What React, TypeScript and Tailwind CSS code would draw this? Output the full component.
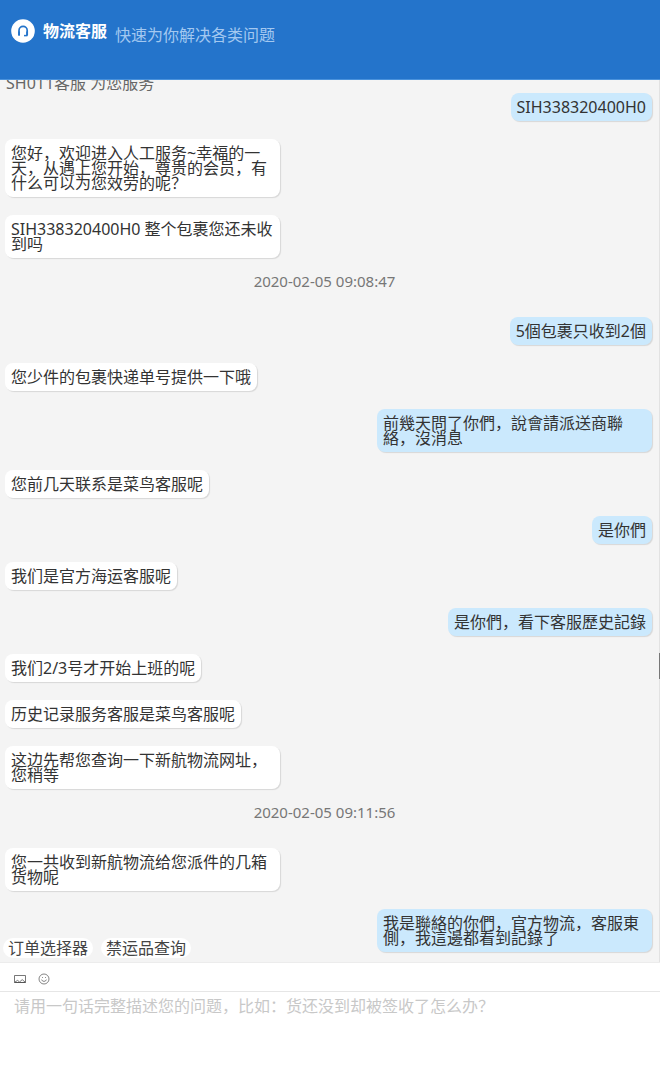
import { useState } from "react";
import { clsx } from "clsx";

type Item =
  | { kind: "agent" | "customer"; text: string }
  | { kind: "time"; text: string };

const HISTORY: Item[] = [
  { kind: "customer", text: "SIH338320400H0" },
  { kind: "agent", text: "您好，欢迎进入人工服务~幸福的一天，从遇上您开始，尊贵的会员，有什么可以为您效劳的呢？" },
  { kind: "agent", text: "SIH338320400H0 整个包裹您还未收到吗" },
  { kind: "time", text: "2020-02-05 09:08:47" },
  { kind: "customer", text: "5個包裹只收到2個" },
  { kind: "agent", text: "您少件的包裹快递单号提供一下哦" },
  { kind: "customer", text: "前幾天問了你們，說會請派送商聯絡，沒消息" },
  { kind: "agent", text: "您前几天联系是菜鸟客服呢" },
  { kind: "customer", text: "是你們" },
  { kind: "agent", text: "我们是官方海运客服呢" },
  { kind: "customer", text: "是你們，看下客服歷史記錄" },
  { kind: "agent", text: "我们2/3号才开始上班的呢" },
  { kind: "agent", text: "历史记录服务客服是菜鸟客服呢" },
  { kind: "agent", text: "这边先帮您查询一下新航物流网址，您稍等" },
  { kind: "time", text: "2020-02-05 09:11:56" },
  { kind: "agent", text: "您一共收到新航物流给您派件的几箱货物呢" },
  { kind: "customer", text: "我是聯絡的你們，官方物流，客服東側，我這邊都看到記錄了" },
];

const SHORTCUTS = ["订单选择器", "禁运品查询"];

function Logo() {
  return (
    <svg viewBox="0 0 24 24" className="size-6 shrink-0" aria-hidden="true">
      <circle cx="12" cy="12" r="11.8" fill="#fff" />
      <path
        d="M8 16.4v-5a4.1 4.1 0 0 1 8.2 0v4.8"
        fill="none"
        stroke="#2474cb"
        strokeWidth="1.7"
      />
      <path d="M7.2 12.4H9v4.2H7.2zM15.2 12.4H17v4.2h-1.8z" fill="#2474cb" />
      <path d="M13 16.6h3.4" stroke="#2474cb" strokeWidth="1.5" />
    </svg>
  );
}

function PictureIcon() {
  return (
    <svg viewBox="0 0 12 10" className="h-[10px] w-3" fill="none" stroke="#555" aria-hidden="true">
      <path d="M.5 1.5h11v7H.5z" strokeWidth="0.8" />
      <path d="M.5 8.5h11" strokeWidth="1" />
      <path d="M1 8l2.6-1.6L5.6 8l2.6-2.4L11 8" strokeWidth="0.8" />
    </svg>
  );
}

function SmileIcon() {
  return (
    <svg viewBox="0 0 12 12" className="size-3" fill="none" stroke="#666" aria-hidden="true">
      <circle cx="6" cy="6" r="5" strokeWidth="0.8" />
      <path d="M3.6 6.6a2.5 2.5 0 0 0 4.8 0" strokeWidth="0.8" />
      <path d="M4 4.5h.9M7.1 4.5H8" strokeWidth="0.8" />
    </svg>
  );
}

function Message({ item }: { item: Item }) {
  if (item.kind === "time") {
    return (
      <time className="mb-3 block pr-2 text-center text-[15px] leading-[11px] text-[#777]">
        {item.text}
      </time>
    );
  }

  return (
    <p
      className={clsx(
        "max-w-[275px] rounded-lg px-[6px] pt-[7px] pb-[6px] leading-[15px] text-[#333] shadow-[1px_1px_1px_rgba(0,0,0,0.12)]",
        item.kind === "agent" ? "self-start bg-white" : "self-end bg-[#cbe9fd]"
      )}
    >
      {item.text}
    </p>
  );
}

export default function App() {
  const [draft, setDraft] = useState("");

  return (
    <div
      lang="zh-CN"
      className="flex h-screen flex-col bg-white font-['Noto_Sans','Noto_Sans_CJK_SC',sans-serif] text-base"
    >
      <header className="flex shrink-0 items-start gap-2 border-b border-[#4a92dc] bg-[#2474cb] px-[11px] pt-[19px] pb-9">
        <Logo />
        <h1 className="leading-6 font-bold text-white">物流客服</h1>
        <p className="pt-1 leading-6 -mb-1 text-[#a3c8f0]">快速为你解决各类问题</p>
      </header>

      <main className="relative flex min-h-0 flex-1 flex-col justify-end overflow-hidden bg-[#f4f4f4]">
        <div className="flex shrink-0 flex-col gap-[18px] pr-2 pb-[10px] pl-[5px]">
          <p className="-mb-4 pl-px leading-[15px] text-[#666]">SH011客服 为您服务</p>
          {HISTORY.map((item, i) => (
            <Message key={i} item={item} />
          ))}
        </div>

        <div className="absolute bottom-1 left-[3px] flex gap-2">
          {SHORTCUTS.map((label) => (
            <button
              key={label}
              type="button"
              className="rounded-full bg-white px-[5px] leading-5 text-[#444]"
            >
              {label}
            </button>
          ))}
        </div>

        {/* scrollbar */}
        <div className="absolute inset-y-0 right-0 w-px bg-[#e2e2e2]">
          <div className="absolute top-[65%] h-[26px] w-full bg-[#777]" />
        </div>
      </main>

      <footer className="shrink-0 border-t border-[#ececec]">
        <div className="flex items-center gap-3 border-b border-[#e6e6e6] px-[14px] pt-[10px] pb-[6px]">
          <button type="button" aria-label="发送图片">
            <PictureIcon />
          </button>
          <button type="button" aria-label="表情">
            <SmileIcon />
          </button>
        </div>
        <textarea
          aria-label="输入消息"
          value={draft}
          onChange={(e) => setDraft(e.target.value)}
          placeholder="请用一句话完整描述您的问题，比如：货还没到却被签收了怎么办？"
          className="block h-[88px] w-full resize-none px-[14px] pt-1 leading-5 text-[#333] outline-none placeholder:text-[#c8c8c8]"
        />
      </footer>
    </div>
  );
}
